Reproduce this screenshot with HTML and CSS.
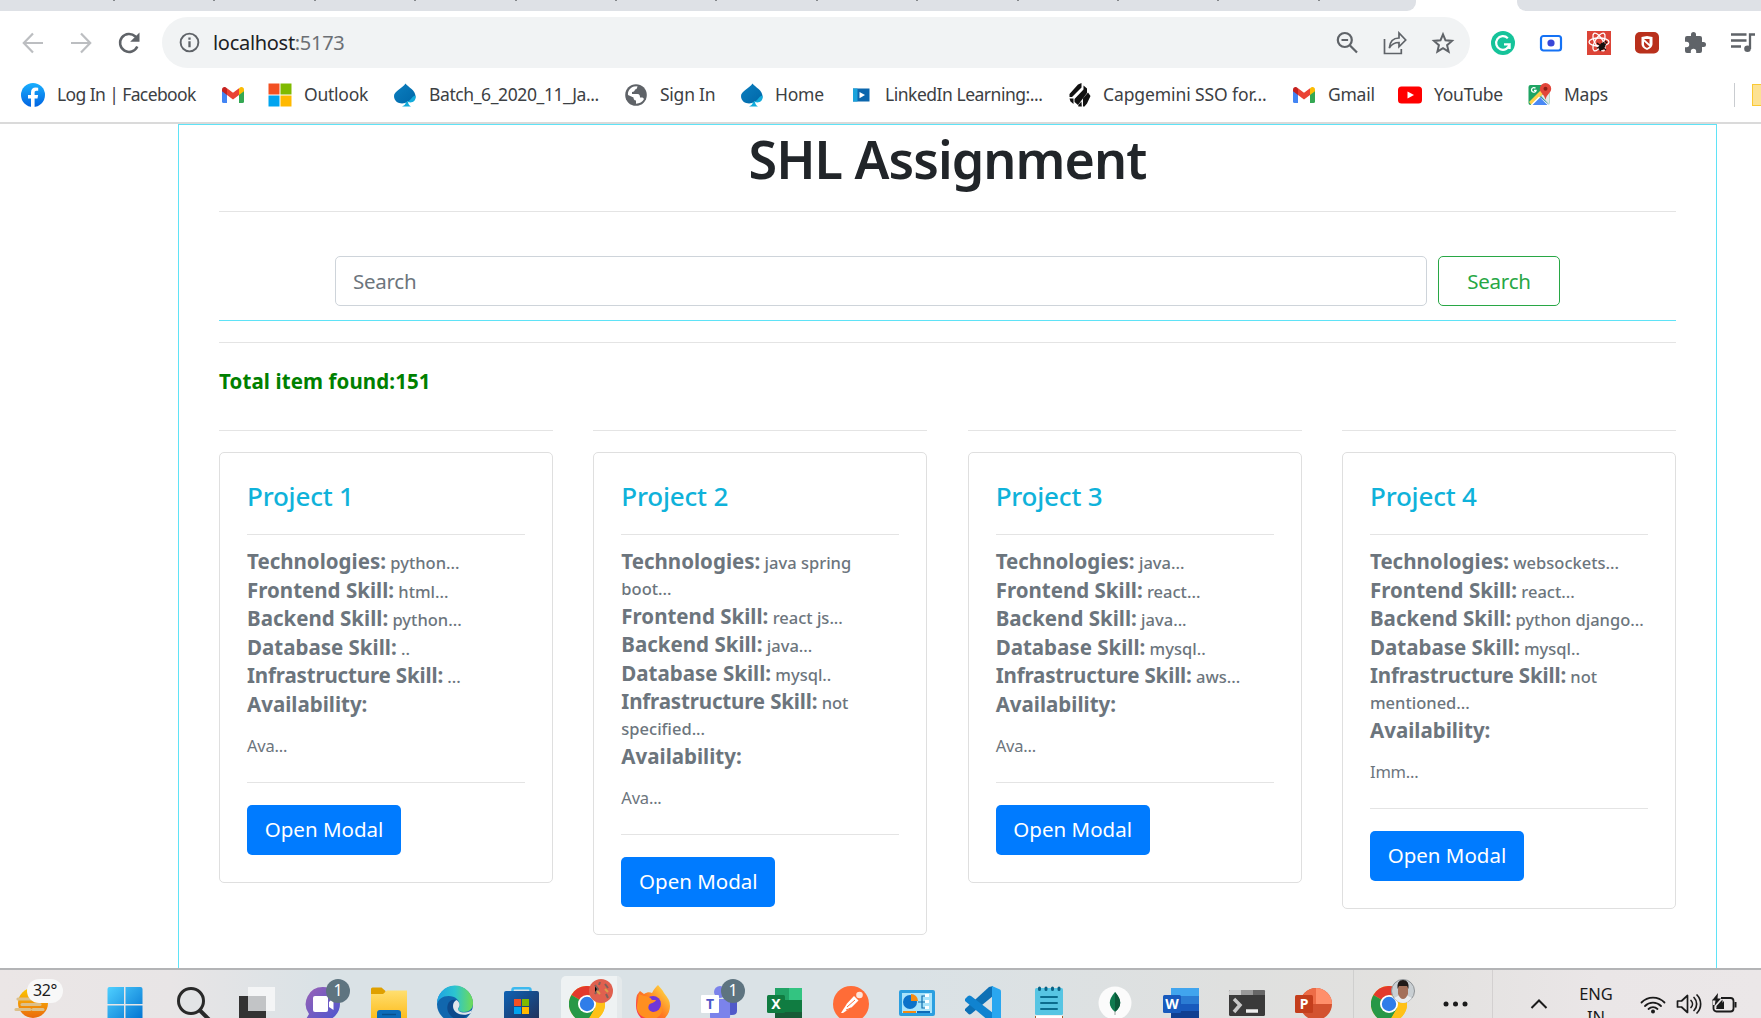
FILE: index.html
```html
<!DOCTYPE html>
<html lang="en">
<head>
<meta charset="utf-8">
<title>SHL Assignment</title>
<link rel="stylesheet" href="styles.css">
</head>
<body>
<svg class="defs" width="0" height="0" aria-hidden="true">
  <defs>
    <linearGradient id="spadeBlue" x1="0" y1="0" x2="1" y2="1"><stop offset="0" stop-color="#0b7fc0"/><stop offset="1" stop-color="#0067a8"/></linearGradient>
    <linearGradient id="fbBlue" x1="0" y1="0" x2="0" y2="1"><stop offset="0" stop-color="#19affe"/><stop offset="1" stop-color="#0163e1"/></linearGradient>
    <linearGradient id="winBlue" x1="0" y1="0" x2="1" y2="1"><stop offset="0" stop-color="#4fd0ff"/><stop offset="1" stop-color="#0070d0"/></linearGradient>
    <linearGradient id="sun" x1="0" y1="0" x2="0" y2="1"><stop offset="0" stop-color="#fcc800"/><stop offset="1" stop-color="#ea6a0c"/></linearGradient>
    <linearGradient id="chatG" x1="0" y1="0" x2="1" y2="1"><stop offset="0" stop-color="#9b62b5"/><stop offset="1" stop-color="#4a55d0"/></linearGradient>
    <linearGradient id="folderG" x1="0" y1="0" x2="0" y2="1"><stop offset="0" stop-color="#ffdf70"/><stop offset="1" stop-color="#fdb813"/></linearGradient>
    <linearGradient id="edgeTop" x1="0" y1="0" x2="1" y2="0"><stop offset="0" stop-color="#1ea2e4"/><stop offset=".5" stop-color="#2cc4d0"/><stop offset="1" stop-color="#6fdc55"/></linearGradient>
    <linearGradient id="storeG" x1="0" y1="0" x2="1" y2="1"><stop offset="0" stop-color="#0d62b4"/><stop offset="1" stop-color="#223058"/></linearGradient>
    <linearGradient id="foxG" x1="0" y1="1" x2="1" y2="0"><stop offset="0" stop-color="#f5236a"/><stop offset=".5" stop-color="#ff7a22"/><stop offset="1" stop-color="#fff04a"/></linearGradient>
    <symbol id="gmail" viewBox="0 0 22 16"><path fill="#4285f4" d="M0 3v11.5A1.5 1.5 0 0 0 1.500 16H5V7z"/><path fill="#34a853" d="M22 3v11.500A1.500 1.500 0 0 1 20.500 16H17V7z"/><path fill="#fbbc04" d="M17 1.400V8l5-3.800V2.500C22 0 19-.8 17.400.9z"/><path fill="#c5221f" d="M5 1.400V8L0 4.200V2.500C0 0 3-.8 4.600.9z"/><path fill="#ea4335" d="M5 8V1.200l6 4.600 6-4.600V8l-6 4.500z"/></symbol>
    <symbol id="spade" viewBox="0 0 24 24"><path fill="url(#spadeBlue)" d="M12.500.5c3 4 10 6.500 10 13 0 4-4 6.500-8 5C11 22 1 21 1 13 1 8 9.500 5.500 12.500.5z"/><path fill="#12abdb" d="M22.500 12.500c1 5.500-3.500 8-7.500 6.500.2 2.500 1.500 3.500 3 4.500H9c2-.8 3.500-2 4-4.500C18.500 18 18 13.500 22.500 12.500z"/></symbol>
    <symbol id="chrome" viewBox="0 0 36 36"><circle cx="18" cy="18" r="18" fill="#ffc117"/><path fill="#e3392c" d="M18 18 2.400 9A18 18 0 0 1 33.600 9z"/><path fill="#279847" d="M2.400 9A18 18 0 0 0 18 36l8-13.500L18 18z"/><path fill="#ffc117" d="M18 36A18 18 0 0 0 33.600 9H18l8 13.500z"/><circle cx="18" cy="18" r="9" fill="#fff"/><circle cx="18" cy="18" r="7.200" fill="#2f7de9"/></symbol>
  </defs>
</svg>

<div class="tabstrip">
  <div class="tabs-left"><i></i><i></i><i></i><i></i><i></i><i></i><i></i><i></i><i></i><i></i><i></i><i></i><i></i></div>
  <div class="tabs-right"></div>
</div>

<div class="toolbar">
  <svg class="nav" viewBox="0 0 24 24"><path fill="none" stroke="#bcbec1" stroke-width="2.200" d="M22 12H3M12 2.500 2.800 12l9.200 9.500"/></svg>
  <svg class="nav" viewBox="0 0 24 24"><path fill="none" stroke="#bcbec1" stroke-width="2.200" d="M2 12h19M12 2.500l9.200 9.500-9.200 9.500"/></svg>
  <svg class="nav" viewBox="0 0 24 24"><path fill="none" stroke="#5f6368" stroke-width="2.500" d="M20.300 15.500A9 9 0 1 1 18.400 5.500l2 2.200"/><path fill="#5f6368" d="M22.500 1.500v9.200h-9.300z"/></svg>
  <div class="omnibox">
    <svg class="info" viewBox="0 0 22 22"><circle cx="11" cy="11" r="9.300" fill="none" stroke="#5f6368" stroke-width="2"/><path fill="#5f6368" d="M9.800 9.800h2.400v6.200H9.800zM9.800 5.800h2.400v2.400H9.800z"/></svg>
    <span class="url">localhost<span class="port">:5173</span></span>
    <div class="omni-icons">
      <svg viewBox="0 0 24 24"><g fill="none" stroke="#5f6368" stroke-width="2.200"><circle cx="9.800" cy="9" r="7"/><path d="M15 14.500 22 21.500M6.500 9h6.600"/></g></svg>
      <svg viewBox="0 0 24 24"><g fill="none" stroke="#5f6368" stroke-width="1.700"><path d="M1.500 8v14.500h16.800V18"/><path d="M6.300 17c.6-6.500 4-10 9.700-10V2l6.700 7-6.700 6.800V11.500c-4.500 0-7.300 1.600-9.700 5.500z"/></g></svg>
      <svg viewBox="0 0 24 24"><path fill="none" stroke="#5f6368" stroke-width="2" d="M12 3.300l2.500 6 6.500.6-4.900 4.300 1.500 6.400-5.600-3.400-5.600 3.400 1.500-6.400L3 9.900l6.500-.6z"/></svg>
    </div>
  </div>
  <div class="extensions">
    <svg viewBox="0 0 24 24"><circle cx="12" cy="12" r="12" fill="#15c39a"/><path fill="none" stroke="#fff" stroke-width="2.200" d="M16.800 7.200A6.800 6.800 0 1 0 18.600 13.300H13M18.600 12.500V18"/></svg>
    <svg viewBox="0 0 24 24"><rect x="2" y="5" width="20" height="14.500" rx="2.500" fill="#fff" stroke="#1572f5" stroke-width="2.200"/><circle cx="12" cy="12" r="3.600" fill="#3947d8"/></svg>
    <svg viewBox="0 0 24 24"><path fill="#dc4437" d="M0 0h24v24H0z"/><g fill="none" stroke="#fff" stroke-width="1.300"><ellipse cx="12" cy="11" rx="10" ry="4"/><ellipse cx="12" cy="11" rx="10" ry="4" transform="rotate(60 12 11)"/><ellipse cx="12" cy="11" rx="10" ry="4" transform="rotate(120 12 11)"/></g><ellipse cx="15" cy="15.500" rx="2.800" ry="4.200" transform="rotate(35 15 15.500)" fill="#16110f"/><path stroke="#16110f" stroke-width="1.200" d="m10 12 9 7M10 17l9-4M13 20l4-9M18 10l2 2"/></svg>
    <svg viewBox="0 0 24 24"><rect y="1" width="24" height="21.500" rx="5" fill="#b9301c"/><path fill="#fff" d="M6.500 6 12 5l5.500 1v7c0 3-3 5-5.500 6-2.500-1-5.500-3-5.500-6z"/><path fill="#b9301c" d="M9 8h5.500v5zM9 10.500l5.500 5L12 17c-2-1-3-2-3-4z"/></svg>
    <svg viewBox="0 0 24 24"><path fill="#5f6368" d="M20.500 11H19V7a2 2 0 0 0-2-2h-4V3.500a2.500 2.500 0 0 0-5 0V5H4a2 2 0 0 0-2 2v3.800h1.500a2.700 2.700 0 0 1 0 5.400H2V20a2 2 0 0 0 2 2h3.800v-1.500a2.700 2.700 0 0 1 5.400 0V22H17a2 2 0 0 0 2-2v-4h1.500a2.500 2.500 0 0 0 0-5z"/></svg>
    <svg viewBox="0 0 24 24"><path fill="none" stroke="#5f6368" stroke-width="2.300" d="M0 3.500h15.500M0 9.500h15.500M0 15.500h10M19 18V3.500h5"/><circle cx="16.500" cy="17.800" r="3.300" fill="#5f6368"/></svg>
  </div>
</div>

<div class="bookmarks">
  <svg viewBox="0 0 24 24"><circle cx="12" cy="12" r="12" fill="url(#fbBlue)"/><path fill="#fff" d="M10 24v-8.500H7V12h3V9.500C10 6.300 11.800 4.600 14.700 4.600l2.500.2v3h-1.600c-1.500 0-2 .8-2 1.800V12h3.500l-.6 3.500h-2.900V24z"/></svg>
  <span class="b1">Log In | Facebook</span>
  <svg class="gm" viewBox="0 0 22 16"><use href="#gmail"/></svg>
  <svg viewBox="0 0 24 24"><path fill="#f25022" d="M.5.5h11v11H.5z"/><path fill="#7fba00" d="M12.500.5h11v11h-11z"/><path fill="#00a4ef" d="M.5 12.500h11v11H.5z"/><path fill="#ffb900" d="M12.500 12.500h11v11h-11z"/></svg>
  <span class="b2">Outlook</span>
  <svg viewBox="0 0 24 24"><use href="#spade"/></svg>
  <span class="b3">Batch_6_2020_11_Ja...</span>
  <svg viewBox="0 0 24 24"><circle cx="12" cy="12" r="10.800" fill="#5f6368"/><path fill="#fff" d="M4 12c-.5-4 2-7.500 6-8.600l3.500-.2c-.5 1.800-.5 3-2.500 3.300-.3 1.800-1 2.300-3 2.500V11h5.500c2 .2 2.500 1.500 2.500 3.500h1.500c1.500 0 2 .6 2.500 1.500-1.500 2.800-4.500 4.700-8 4.700V17.500c-2 0-2.500-1.500-2.500-3z"/></svg>
  <span class="b4">Sign In</span>
  <svg viewBox="0 0 24 24"><use href="#spade"/></svg>
  <span class="b5">Home</span>
  <svg viewBox="0 0 24 24"><path fill="#0b66ad" d="M3 5.500h16.500v13H3z"/><path fill="#1aa3dc" d="M3 5.500h4.500v13H3z"/><path fill="#fff" d="M9.500 9l5.500 3-5.500 3.200z"/></svg>
  <span class="b6">LinkedIn Learning:...</span>
  <svg viewBox="0 0 24 24"><path fill="#111" d="M10 1.500 13.500 0v4.500L4 14H1.500v-3zM15.500 2.500 19 5.500v4.500l-9 12-3.500-3v-3l9-9.500zM1.500 15.500h4v5.500l-3-2.500zM20 9.500l2.500 3.500-3.500 7.500-2.500 3h-1.500v-8z"/><path fill="#111" d="m13.500 18.500.3 5h-3.500v-1.500z"/></svg>
  <span class="b7">Capgemini SSO for...</span>
  <svg class="gm" viewBox="0 0 22 16"><use href="#gmail"/></svg>
  <span class="b8">Gmail</span>
  <svg viewBox="0 0 24 24"><rect y="3.500" width="24" height="17" rx="3.500" fill="#f00"/><path fill="#fff" d="M9.500 8.500 16 12l-6.500 3.500z"/></svg>
  <span class="b9">YouTube</span>
  <svg viewBox="0 0 24 24"><rect x=".5" y="2" width="21" height="20" rx="2" fill="#1fa463"/><path fill="#e6e8ea" d="M13 12.500 21.500 8v14L13 13z"/><path fill="#4989f5" d="M3 22l9-9 9 9z"/><path fill="#ffd04b" d="M1 19 15 5l3 3L3.500 22.300z"/><path fill="#fff" d="M11 13.500 2.500 22h2L12 14.500l7.500 7.500h1.800z"/><path fill="#e2453a" d="M17.500 0a5.700 5.700 0 0 1 5.700 5.700c0 4-4.700 5.600-5.700 11-1-5.400-5.700-7-5.700-11A5.700 5.700 0 0 1 17.500 0z"/><circle cx="17.500" cy="5.700" r="2" fill="#8c1f17"/><path fill="none" stroke="#fff" stroke-width="1.300" d="M7.500 5.300a2.300 2.300 0 1 0 .6 2H6"/></svg>
  <span class="b10">Maps</span>
  <i class="divider"></i>
  <i class="folder"></i>
</div>

<main class="viewport">
  <div class="container">
    <h1>SHL Assignment</h1>
    <hr>
    <form class="search">
      <div class="field">Search</div>
      <button type="button" class="btn-outline">Search</button>
    </form>
    <hr>
    <p class="total">Total item found:151</p>
    <div class="cards">
      <div class="col"><hr>
        <article class="card">
          <h4>Project 1</h4><hr>
          <p><b>Technologies:</b> python...</p>
          <p><b>Frontend Skill:</b> html...</p>
          <p><b>Backend Skill:</b> python...</p>
          <p><b>Database Skill:</b> ..</p>
          <p><b class="infra">Infrastructure Skill:</b> ...</p>
          <p><b>Availability:</b></p>
          <div class="avail">Ava...</div><hr>
          <button type="button" class="btn">Open Modal</button>
        </article>
      </div>
      <div class="col"><hr>
        <article class="card">
          <h4>Project 2</h4><hr>
          <p><b>Technologies:</b> java spring</p>
          <p class="wrap">boot...</p>
          <p><b>Frontend Skill:</b> react js...</p>
          <p><b>Backend Skill:</b> java...</p>
          <p><b>Database Skill:</b> mysql..</p>
          <p><b class="infra">Infrastructure Skill:</b> not</p>
          <p class="wrap">specified...</p>
          <p><b>Availability:</b></p>
          <div class="avail">Ava...</div><hr>
          <button type="button" class="btn">Open Modal</button>
        </article>
      </div>
      <div class="col"><hr>
        <article class="card">
          <h4>Project 3</h4><hr>
          <p><b>Technologies:</b> java...</p>
          <p><b>Frontend Skill:</b> react...</p>
          <p><b>Backend Skill:</b> java...</p>
          <p><b>Database Skill:</b> mysql..</p>
          <p><b class="infra">Infrastructure Skill:</b> aws...</p>
          <p><b>Availability:</b></p>
          <div class="avail">Ava...</div><hr>
          <button type="button" class="btn">Open Modal</button>
        </article>
      </div>
      <div class="col"><hr>
        <article class="card">
          <h4>Project 4</h4><hr>
          <p><b>Technologies:</b> websockets...</p>
          <p><b>Frontend Skill:</b> react...</p>
          <p><b>Backend Skill:</b> python django...</p>
          <p><b>Database Skill:</b> mysql..</p>
          <p><b class="infra">Infrastructure Skill:</b> not</p>
          <p class="wrap">mentioned...</p>
          <p><b>Availability:</b></p>
          <div class="avail">Imm...</div><hr>
          <button type="button" class="btn">Open Modal</button>
        </article>
      </div>
    </div>
  </div>
</main>

<footer class="taskbar">
  <div class="weather">
    <svg viewBox="0 0 66 48"><circle cx="33" cy="33" r="15" fill="url(#sun)"/><g stroke="#dcc08a" stroke-width="3.200" stroke-linecap="round"><path d="M18 29h14M37 29h8M22 34.500h18M16 39.500h14M33 39.500h10"/></g></svg>
    <span class="temp">32°</span>
  </div>
  <div class="apps">
    <div class="app"><svg viewBox="0 0 66 48"><g fill="url(#winBlue)"><path d="M15.500 19a2 2 0 0 1 2-2H32v17H15.500zM33.500 17h15a2 2 0 0 1 2 2v15h-17zM15.500 35.500H32V52H15.500zM33.500 35.500h17V52h-17z"/></g></svg></div>
    <div class="app"><svg viewBox="0 0 66 48"><circle cx="33" cy="31" r="12.500" fill="#e2e4e6" stroke="#292929" stroke-width="3"/><path stroke="#292929" stroke-width="4" d="M41.500 40 51 49.500"/></svg></div>
    <div class="app"><svg viewBox="0 0 66 48"><path fill="#333" d="M15 26h27v24H15z"/><path fill="#f4f5f6" d="M24 17h27v24H24z"/><path fill="#c2c4c6" d="M24 26h18v15H24z"/></svg></div>
    <div class="app"><svg viewBox="0 0 66 48"><path fill="url(#chatG)" d="M33 17a17 17 0 0 1 0 34H15l4-7A17 17 0 0 1 33 17z"/><rect x="23" y="26" width="15" height="16" rx="2" fill="#fff"/><path fill="#fff" d="m39 32 4.500-4v12L39 37z"/></svg><span class="badge">1</span></div>
    <div class="app"><svg viewBox="0 0 66 48"><path fill="#dfa000" d="M15 19q0-1.500 1.500-1.500h9l4 3.500v3H15z"/><path fill="url(#folderG)" d="M15 24h12l4-3.500h20V52H15z"/><path fill="#0c6cba" d="M21 48v-5q0-3 3-3h18q3 0 3 3v5z"/><path stroke="#07508e" stroke-width="1.500" d="M26 44.500h14"/></svg></div>
    <div class="app"><svg viewBox="0 0 66 48"><circle cx="33" cy="34" r="18" fill="#1167ae"/><path fill="url(#edgeTop)" d="M15 34a18 18 0 0 1 36-1c0 6-4 9-9 9-4 0-6-1-6-3 1-1 1.500-2 1.500-4 0-5-4-9-11-9-6 0-10 3-11.500 8z"/><path fill="#0d4a8c" d="M26 34c-3 8 4 16 13 16l10-7c-8 4-18 1-18-7 0-3 1-5 3-6-4-1-7 1-8 4z"/><path fill="#e0e6ea" d="M31 36c0-3 1.500-5 3.500-6 2 1 3 3 3 5s-1.500 3-1.500 4c0 2 3 4 7 3.500 3 0 5-1 7-2.500l-1 3c-7 4-18 1-18-7z"/></svg></div>
    <div class="app"><svg viewBox="0 0 66 48"><path fill="none" stroke="#3cb9ef" stroke-width="2.500" d="M24.500 23v-3q0-1.700 1.700-1.700h14.600q1.700 0 1.700 1.700v3"/><path fill="url(#storeG)" d="M16 23q0-2 2-2h31q2 0 2 2v28H16z"/><path fill="#f25022" d="M26 29h7v7h-7z"/><path fill="#7fba00" d="M34 29h7v7h-7z"/><path fill="#00a4ef" d="M26 37h7v7h-7z"/><path fill="#ffb900" d="M34 37h7v7h-7z"/></svg></div>
    <div class="app active"><svg viewBox="0 0 66 48"><use href="#chrome" x="15" y="16" width="36" height="36"/><circle cx="47" cy="21" r="12" fill="#e0604f"/><path stroke="#7d625c" stroke-width="2" d="m41 15 3 4-3 5M51 14l3 4M52 24l2 4M46 12l-1 3"/><path stroke="#d9a04a" stroke-width="2" d="m43 21 3 3M51 19l3 3"/></svg></div>
    <div class="app"><svg viewBox="0 0 66 48"><path fill="url(#foxG)" d="M17 25l3-4 4 3c3-2 6-2 8-1 2-4 4-6 6-8 2 3 5 5 6 8 4 5 6 8 6 13a17 17 0 0 1-34 0c0-4 0-8 1-11z"/><circle cx="33" cy="34" r="8" fill="#7037d8"/><path fill="#ff8f20" d="M19 24l5 2c4 0 6 1 8 4h4c-1 3-6 3-7 5-2 4 1 7 5 7s8-4 7-8c4 9-3 16-11 15s-14-6-13-14z"/></svg></div>
    <div class="app"><svg viewBox="0 0 66 48"><circle cx="34" cy="22" r="6" fill="#7b83eb"/><path fill="#5059c9" d="M40 29h11v12q0 4-5 4h-6z"/><path fill="#7b83eb" d="M24 29h20v14a10 10 0 0 1-20 4z"/><rect x="15" y="25" width="18" height="18" rx="1" fill="#fff"/></svg><span class="letter teams">T</span><span class="badge shifted">1</span></div>
    <div class="app"><svg viewBox="0 0 66 48"><path fill="#21a366" d="M23 18h27v12H23z"/><path fill="#33c481" d="M37 18h13v12H37z"/><path fill="#107c41" d="M23 30h27v12H23z"/><path fill="#185c37" d="M23 42h27v8H23z"/><rect x="15" y="25" width="18" height="18" rx="1.500" fill="#107c41"/></svg><span class="letter">X</span></div>
    <div class="app"><svg viewBox="0 0 66 48"><circle cx="33" cy="34" r="18" fill="#ff6c37"/><circle cx="41.500" cy="25" r="3.300" fill="#ffe5da"/><path fill="#fff" d="m36 26 4.500 4.500L34 37l-9 6h-2l6-9.500z"/><path stroke="#ff6c37" stroke-width="1" d="m29 37 8-7M28 40l5-2"/></svg></div>
    <div class="app"><svg viewBox="0 0 66 48"><rect x="15" y="20" width="36" height="26" rx="2" fill="#2b9fe0"/><path fill="#a9e4fb" d="M18 23h30v20H18z"/><circle cx="26" cy="32" r="7" fill="#0b72c9"/><path fill="#f48b12" d="M27 31v-7a7 7 0 0 1 7 7z"/><path fill="none" stroke="#136fae" stroke-width="1.200" d="M34 32h4v-6h3M38 32h3M38 32v6h3"/><path fill="#fff" d="M41 24h4v3h-4zM41 30h4v3h-4zM41 36h4v3h-4z"/><path stroke="#f48b12" stroke-width="2" d="M19 42h13"/><path stroke="#0b6bb8" stroke-width="2" d="M33 42h13"/></svg></div>
    <div class="app"><svg viewBox="0 0 66 48"><path fill="#0d70b5" d="m15 39 24-22 4-1v10L21 44q-1.500 1-3-.5l-3-3z"/><path fill="#1083d0" d="m15 29 3-3q1.500-1 3 0l22 17v9l-4-1-24-20z"/><path fill="#2aa7f0" d="M42 16l8 3.500q1 .5 1 2V52h-9z"/></svg></div>
    <div class="app"><svg viewBox="0 0 66 48"><path fill="#a8622f" d="M19 46h28v2H19z"/><rect x="19" y="18" width="28" height="27" rx="1.500" fill="#57c5e3"/><path fill="#fff" d="M20 45.500h26V48H20z"/><path stroke="#0b6285" stroke-width="3" stroke-linecap="round" d="M23.500 18v1.500M30 18v1.500M36.500 18v1.500M43 18v1.500"/><path stroke="#0b6c8e" stroke-width="2" stroke-linecap="round" d="M25 27h16M25 33h16M25 39h16"/></svg></div>
    <div class="app"><svg viewBox="0 0 66 48"><circle cx="33" cy="33" r="16.500" fill="#fbfbfb"/><path fill="#0f7a4f" d="M33 22c7 8 7 14 0 20-7-6-7-12 0-20z"/><path fill="#0a5a3a" d="M33 22c7 8 7 14 0 20z"/><path stroke="#9aa5a0" d="M33 41v4"/></svg></div>
    <div class="app"><svg viewBox="0 0 66 48"><path fill="#41a5ee" d="M23 18h28v8H23z"/><path fill="#2b7cd3" d="M23 26h28v8H23z"/><path fill="#185abd" d="M23 34h28v7H23z"/><path fill="#103f91" d="M23 41h28v9H23z"/><rect x="15" y="25" width="18" height="18" rx="1.500" fill="#185abd"/></svg><span class="letter">W</span></div>
    <div class="app"><svg viewBox="0 0 66 48"><rect x="15" y="20" width="36" height="26" rx="1.500" fill="#3a3a3a"/><path fill="#ccc" d="M16 20h11v5H15v-4z"/><path fill="#999" d="M27 20h12v5H27z"/><path fill="#666" d="M39 20h11l1 1v4H39z"/><path fill="none" stroke="#c8c8c8" stroke-width="3.500" d="m20 29 6 6-6 7"/><path stroke="#eee" stroke-width="3.500" d="M32 41h12"/></svg></div>
    <div class="app"><svg viewBox="0 0 66 48"><circle cx="36" cy="34" r="16" fill="#d35230"/><path fill="#ed6c47" d="M20 34a16 16 0 0 1 16-16v16z"/><path fill="#ff8f6b" d="M36 18a16 16 0 0 1 16 16H36z"/><rect x="15" y="25" width="18" height="18" rx="1.500" fill="#c43e1c"/></svg><span class="letter">P</span></div>
  </div>
  <div class="extra">
    <div class="app"><svg viewBox="0 0 66 48"><use href="#chrome" x="15" y="16" width="36" height="36"/><circle cx="47" cy="21" r="11.500" fill="#c9cfd3" stroke="#8f9396"/><path fill="#e9ecef" d="M38 28q9-6 18 0-4 5-9 5t-9-5z"/><path fill="#a4705a" d="M42 15h10v9q-2 5-5 5t-5-5z"/><path fill="#211a18" d="M41.500 19q-1-9 5.500-9t5.500 9l-1.500-3h-8z"/></svg></div>
    <svg class="dots" viewBox="0 0 26 6"><g fill="#1b1b1b"><circle cx="3" cy="3" r="2.500"/><circle cx="12.500" cy="3" r="2.500"/><circle cx="22" cy="3" r="2.500"/></g></svg>
  </div>
  <div class="tray">
    <svg class="chev" viewBox="0 0 18 10"><path fill="none" stroke="#1b1b1b" stroke-width="2" d="m1.500 9 7.500-7.500L16.500 9"/></svg>
    <div class="lang"><span>ENG</span><span>IN</span></div>
    <svg class="wifi" viewBox="0 0 26 20"><g fill="none" stroke="#1b1b1b" stroke-width="1.800" stroke-linecap="round"><path d="M1.500 8.500a16 16 0 0 1 23 0M5 12a11.200 11.200 0 0 1 16 0M8.500 15a6.500 6.500 0 0 1 9 0"/></g><circle cx="13" cy="17.500" r="2" fill="#1b1b1b"/></svg>
    <svg class="vol" viewBox="0 0 26 20"><g fill="none" stroke="#1b1b1b" stroke-width="1.700" stroke-linejoin="round" stroke-linecap="round"><path d="M1.500 7h4l6-5.500v17l-6-5.500h-4zM15 6.500a5 5 0 0 1 0 7M18 3.500a9.300 9.300 0 0 1 0 13M21 1a13 13 0 0 1 0 18"/></g></svg>
    <svg class="bat" viewBox="0 0 26 20"><rect x="1.500" y="5" width="20" height="13.500" rx="3" fill="none" stroke="#1b1b1b" stroke-width="1.800"/><path fill="#1b1b1b" d="M22.500 9h2v5.500h-2zM4 16l8-8v8z"/><path fill="#ebe7e8" d="M1 0h8v12H1z"/><path fill="#1b1b1b" d="M6 0 0 7.500h3.500L2.500 13 9 5.500H5.500z"/><path fill="#1b1b1b" d="M4.500 16v-3l6-6.500V16z"/></svg>
  </div>
</footer>
</body>
</html>
```
FILE: styles.css
```css
* { box-sizing: border-box; }
html, body { margin: 0; height: 100%; overflow: hidden; }
body {
  display: flex;
  flex-direction: column;
  width: 1761px;
  height: 1018px;
  background: #fff;
  font-family: "Noto Sans", "Open Sans", sans-serif;
  color: #212529;
}
.defs { position: absolute; }
svg { display: block; flex: none; }

/* Browser chrome */
.tabstrip { display: flex; justify-content: space-between; height: 11px; flex: none; }
.tabs-left { display: flex; gap: 98.400px; width: 1416px; padding-left: 113px; background: #dee1e6; border-bottom-right-radius: 9px; }
.tabs-left i { flex: none; width: 2px; height: 1px; background: #85888c; }
.tabs-right { width: 244px; background: #dee1e6; border-bottom-left-radius: 9px; }

.toolbar { display: flex; align-items: center; flex: none; height: 63px; padding-left: 21px; }
.nav { width: 24px; height: 24px; margin-right: 24px; }
.omnibox { display: flex; align-items: center; width: 1308px; height: 51px; margin-left: -3px; padding: 0 15px 0 17px; border-radius: 26px; background: #f1f3f4; }
.info { width: 21px; height: 21px; }
.url { flex: 1; margin-left: 13px; font-size: 20px; line-height: 28px; letter-spacing: -.3px; color: #202124; }
.port { color: #6b6f74; }
.omni-icons, .extensions { display: flex; gap: 24px; }
.omni-icons svg, .extensions svg { width: 24px; height: 24px; }
.extensions { margin-left: 21px; }

.bookmarks {
  display: grid;
  flex: none;
  height: 48px;
  align-items: center;
  padding: 0 0 6px 21px;
  grid-template-columns: 36px 165px 46px 36px 89px 36px 195px 36px 80px 35px 75px 35px 183px 35px 190px 35px 70px 36px 94px 36px 170px 18px 9px;
  font-size: 17.500px;
  line-height: 22px;
  letter-spacing: -.25px;
  color: #3c4043;
  white-space: nowrap;
}
.bookmarks span { padding-bottom: 2px; }
.bookmarks .b1 { letter-spacing: -.600px; }
.bookmarks .b3 { letter-spacing: -.400px; }
.bookmarks .b6 { letter-spacing: -.480px; }
.bookmarks .b7 { letter-spacing: -.100px; }
.bookmarks svg { width: 24px; height: 24px; }
.bookmarks .gm { width: 22px; height: 16px; }
.divider { width: 1px; height: 24px; background: #c9ccd0; }
.folder { width: 9px; height: 22px; background: #fde293; border: 1px solid #fbc934; border-right: 0; }

/* Page */
.viewport { flex: 1; min-height: 0; overflow: hidden; border-top: 2px solid #dadada; padding-left: 178px; }
.container { width: 1539px; height: 860px; padding: 0 40px; border: 1px solid #5fe3f7; }
hr { height: 1px; margin: 0; border: 0; background: #e4e4e4; }
h1 { height: 86px; margin: 0; font-size: 52px; line-height: 67px; font-weight: 600; letter-spacing: -.950px; text-align: center; }
.search { display: flex; gap: 11px; height: 109px; padding: 44px 116px 0; border-bottom: 1px solid #5fe3f7; margin-bottom: 21px; }
.field { width: 1092px; height: 50px; padding-left: 17px; border: 1px solid #ced4da; border-radius: 5px; font-size: 20.500px; line-height: 48px; letter-spacing: -.250px; color: #6c757d; }
.btn-outline { width: 122px; height: 50px; padding: 0; border: 1px solid #28a745; border-radius: 5px; background: #fff; color: #28a745; font: 20.500px/48px "Noto Sans", sans-serif; letter-spacing: -.200px; }
.total { height: 87px; margin: 0; padding-top: 24px; font-size: 20.500px; line-height: 28px; font-weight: 700; letter-spacing: .100px; color: #008000; }
.cards { display: grid; grid-template-columns: repeat(4, 334px); justify-content: space-between; align-items: start; }
.card { margin-top: 21px; padding: 27px; border: 1px solid #dfdfdf; border-radius: 5px; color: #6c757d; white-space: nowrap; }
.card h4 { height: 54px; margin: 0; font-size: 26px; line-height: 33px; font-weight: 500; letter-spacing: -.200px; color: #0fb2da; }
.card h4 + hr { margin-bottom: 12px; }
.card p { height: 28.600px; margin: 0; font-size: 16.500px; line-height: 28px; font-weight: 500; }
.card p.wrap { height: 26px; line-height: 26px; }
.card b { font-size: 20.500px; font-weight: 700; }
.card .infra { letter-spacing: -.150px; }
.avail { height: 63px; padding-top: 13px; font-size: 16.500px; line-height: 28px; letter-spacing: -.200px; }
.btn { display: block; width: 154px; height: 50px; margin-top: 22px; padding: 0 0 1px; border: 0; border-radius: 5px; background: #007bff; color: #fff; font: 20.500px/49px "Noto Sans", sans-serif; }

/* Taskbar */
.taskbar { display: flex; flex: none; height: 50px; overflow: hidden; border-top: 2px solid #b3b4b6; background: linear-gradient(90deg, #ebe6e6 0, #e8e5e6 170px, #dae2e6 320px, #dae2e6 900px, #dfe0df 1230px, #e2e1df 1400px, #eae6e7 1600px, #ebe7e8 100%); }
.taskbar svg { width: 66px; height: 48px; }
.weather { position: relative; width: 92px; }
.temp { position: absolute; left: 27px; top: 9px; width: 36px; height: 24px; border-radius: 12px; background: #f8f8f8; font-size: 16px; line-height: 22px; text-align: center; color: #1b1b1b; letter-spacing: -.4px; }
.apps { display: flex; width: 1261px; }
.app { position: relative; flex: none; width: 66px; height: 48px; }
.app.active::before { content: ""; position: absolute; left: 7px; top: 6px; width: 56px; height: 50px; border-radius: 5px; background: #eef2f3; border-right: 5px solid #e4e9eb; }
.app.active svg { position: relative; }
.badge { position: absolute; left: 36px; top: 9px; width: 24px; height: 24px; border-radius: 50%; background: #5e7480; color: #fff; font-size: 16px; line-height: 23px; text-align: center; }
.badge.shifted { left: 35px; }
.letter { position: absolute; left: 15px; top: 25px; width: 18px; font-size: 14px; line-height: 18px; font-weight: 700; text-align: center; color: #fff; }
.letter.teams { color: #5059c9; }
.extra { display: flex; align-items: center; width: 140px; padding-left: 2px; border-left: 1px solid #cfcfce; border-right: 1px solid #d3d0d0; }
.extra .dots { width: 26px; height: 6px; margin: 19px 0 0 21px; }
.tray { display: flex; flex: 1; align-items: flex-start; }
.tray .chev { width: 18px; height: 10px; margin: 29px 0 0 37px; }
.lang { display: flex; flex-direction: column; align-items: center; width: 40px; margin: 12px 0 0 28px; font-size: 16.500px; line-height: 23px; color: #1b1b1b; }
.tray .wifi { width: 26px; height: 20px; margin: 24px 0 0 24px; }
.tray .vol { width: 26px; height: 20px; margin: 24px 0 0 10px; }
.tray .bat { width: 26px; height: 20px; margin: 23px 0 0 10px; }
```
